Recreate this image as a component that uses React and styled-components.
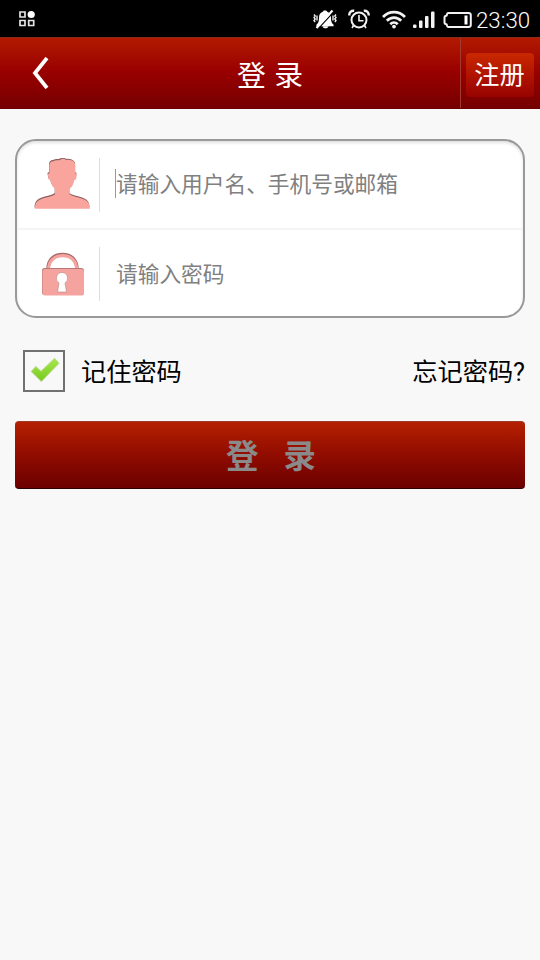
import React from 'react'
import styled, { createGlobalStyle } from 'styled-components'

const GlobalStyle = createGlobalStyle`
  * {
    box-sizing: border-box;
  }

  body {
    margin: 0;
    background: #f8f8f8;
    font-family: Roboto, "Noto Sans CJK SC", sans-serif;
  }

  button, input {
    font-family: inherit;
    border: 0;
    padding: 0;
  }
`

const Screen = styled.div`
  width: 540px;
  min-height: 960px;
  background: #f8f8f8;
`

const StatusBar = styled.div`
  display: flex;
  align-items: center;
  height: 37px;
  padding: 0 9px 0 18px;
  background: #000;
  color: #fff;
`

const StatusIcons = styled.div`
  display: flex;
  align-items: center;
  margin-left: auto;
`

const StatusIcon = styled.svg`
  display: block;
  flex: none;
  margin-right: ${({ $gap }) => $gap || 0}px;
`

const Clock = styled.span`
  width: 55px;
  font-size: 22.3px;
  font-weight: 300;
  line-height: 25px;
  padding-top: 3px;
  white-space: nowrap;
`

const Header = styled.header`
  display: grid;
  grid-template-columns: 80px 1fr 80px;
  grid-template-rows: 70px;
  height: 72px;
  background: linear-gradient(#b21a00, #990000 48%, #760000);
  border-top: 1px solid #8d2a1b;
  border-bottom: 1px solid #6c0000;
  color: #fff;
`

const BackButton = styled.button`
  display: flex;
  align-items: center;
  justify-content: center;
  background: none;
`

const Title = styled.h1`
  margin: 0;
  padding-top: 5px;
  font-size: 28.8px;
  font-weight: 400;
  line-height: 66px;
  text-align: center;
  word-spacing: 1.5px;
`

const HeaderAction = styled.div`
  display: flex;
  padding: 15px 6px 0 5px;
  border-left: 1px solid #a33a32;
`

const RegisterButton = styled.button`
  width: 68px;
  height: 44px;
  padding: 2px 1px 0 0;
  border-radius: 4px;
  background: linear-gradient(#c92800, #b01400 50%, #980300);
  color: #fff;
  font-size: 25.2px;
  line-height: 42px;
`

const Content = styled.main`
  padding: 30px 15px 0;
`

const Fields = styled.div`
  height: 179px;
  border: 2px solid #999;
  border-radius: 21px;
  background: #fff;
  box-shadow: inset 0 2px 3px rgba(0, 0, 0, .12);
`

const Field = styled.label`
  display: flex;
  align-items: center;
  height: ${({ $height }) => $height}px;
  border-bottom: ${({ $last }) => $last ? '0' : '2px solid #f4f4f4'};
`

const FieldIcon = styled.span`
  display: flex;
  justify-content: center;
  align-items: center;
  width: 83px;
  height: 54px;
  padding-left: ${({ $indent }) => $indent}px;
  border-right: 1px solid #ddd;
`

const Caret = styled.span`
  width: 1px;
  height: 29px;
  margin: -2px 0 0 15px;
  background: ${({ $visible }) => $visible ? '#999' : 'transparent'};
`

const Input = styled.input`
  flex: 1;
  min-width: 0;
  height: 40px;
  background: none;
  outline: none;
  font-size: 21.7px;

  &::placeholder {
    color: #808080;
    opacity: 1;
  }
`

const Options = styled.div`
  display: flex;
  align-items: center;
  height: 42px;
  margin-top: 32px;
  padding-left: 8px;
  font-size: 25.2px;
  line-height: 36px;
  color: #000;
`

const Checkbox = styled.span`
  display: flex;
  align-items: flex-start;
  justify-content: center;
  width: 42px;
  height: 42px;
  margin-right: 16px;
  padding: 5px 0 0 1px;
  border: 2px solid #707070;
`

const OptionText = styled.span`
  padding-top: 4px;
`

const Forgot = styled(OptionText)`
  margin-left: auto;
`

const LoginButton = styled.button`
  display: block;
  width: 100%;
  height: 68px;
  margin-top: 29px;
  padding: 5px 0 0 2px;
  border-top: 1px solid #9b3a28;
  border-bottom: 1px solid #2b0000;
  border-radius: 4px;
  background: linear-gradient(#b42000, #900c00 50%, #6c0000);
  color: #8a8a8a;
  font-size: 32.4px;
  font-weight: 700;
  line-height: 61px;
  white-space: pre;
  word-spacing: 4.5px;
`

const AppsIcon = () => (
	<StatusIcon width="18" height="18" fill="none" stroke="#e4e4e4" strokeWidth="1.7">
		<path d="M2 2h5v5H2zM2 10.5h5v5H2zM10.7 10.5h5v5h-5z" />
		<circle cx="13.2" cy="4.5" r="3.6" fill="#fff" stroke="none" />
	</StatusIcon>
)

const MutedBellIcon = () => (
	<StatusIcon width="24" height="20" $gap={11}>
		<path d="M12 1.500c1.200 0 2 .5 2.200 1.300C17 3.700 18 6 18 9c0 3.600.6 4.800 2.600 6.800v1.400H3.400v-1.400C5.400 13.800 6 12.600 6 9c0-3 1-5.300 3.800-6.200.2-.8 1-1.300 2.200-1.300z" fill="#fff" />
		<path d="M9.500 17.200h6c-.5 2.700-5.500 2.700-6 0z" fill="#fff" />
		<path d="M4.800 20.100L20.900 2.600" stroke="#000" strokeWidth="1.300" />
		<path d="M3.500 18.900L19.500 1.500" stroke="#fff" strokeWidth="2.200" />
		<path d="M1 5.500l1.200 1.500L1 8.500 2.200 10 1 11.500 2.200 13M4 6.500v5M23 5.500L21.800 7 23 8.500 21.800 10l1.200 1.500-1.200 1.500M20 6.500v5" stroke="#eee" strokeWidth="1.400" fill="none" />
	</StatusIcon>
)

const AlarmIcon = () => (
	<StatusIcon width="22" height="20" $gap={12} fill="none" stroke="#f2f2f2" strokeWidth="2">
		<circle cx="11" cy="11" r="7.500" />
		<path d="M1.300 6.500C1 3.500 3.200 1.500 6.200 1.800M20.700 6.500c.3-3-1.900-5-4.900-4.700" strokeWidth="2.400" />
		<path d="M11 6v5.700h4.500M5.500 16.500l-1.500 2.500M16.500 16.500l1.500 2.500" strokeWidth="1.600" />
	</StatusIcon>
)

const WifiIcon = () => (
	<StatusIcon width="24" height="20" $gap={7} fill="none" stroke="#f2f2f2" strokeWidth="2.800">
		<path d="M1 8c6.300-6.500 15.700-6.500 22 0M4.800 11.800c4.300-4.200 10.100-4.200 14.400 0M8.300 15.200c2.200-2.200 5.200-2.200 7.400 0" />
		<circle cx="12" cy="17.600" r="1.900" fill="#f2f2f2" stroke="none" />
	</StatusIcon>
)

const SignalIcon = () => (
	<StatusIcon width="22" height="18" $gap={8} fill="#f4f4f4">
		<rect y="14.500" width="3.500" height="3.500" rx="1" />
		<rect x="6" y="10.500" width="3.500" height="7.500" rx="1" />
		<rect x="12" y="6" width="3.500" height="12" rx="1" />
		<rect x="18" y="1.500" width="3.500" height="16.500" rx="1" />
	</StatusIcon>
)

const BatteryIcon = () => (
	<StatusIcon width="29" height="18" $gap={4}>
		<path d="M5.500 3h20q2.300 0 2.300 2.300v9.400q0 2.300-2.300 2.300h-20q-1.500 0-1.800-2.500-2.200-.5-2.200-2v-5q0-1.500 2.200-2Q4 3 5.500 3z" fill="none" stroke="#f2f2f2" strokeWidth="2" />
		<rect x="21.500" y="5.500" width="3" height="9" fill="#fff" />
	</StatusIcon>
)

const userPath = 'M19 4c3-2 5 0 8-2 2-.8 3 0 5 .8 3-.5 7 .2 9 3.700v9.500l1.500 1-.7 5-2 1c-.5 4-2 6.500-4.500 8.500v5.500c5 3.500 13 3 17.500 7 2 2 2.700 4.500 2.700 7.500H.5c0-3 .7-5.500 2.700-7.500 4.500-4 12.500-3.500 17.500-7v-5.500c-2.500-2-4-4.500-4.500-8.500l-2-1-.7-5 1.500-1V8c0-2 1.500-4 4-4z'

const UserIcon = () => (
	<svg width="57" height="53" viewBox="0 1.500 57 53">
		<path d={userPath} fill="#8b6060" transform="translate(0 -.5)" />
		<path d={userPath} fill="#f9a49d" transform="translate(.3 .7)" />
	</svg>
)

const LockIcon = () => (
	<svg width="44" height="44" viewBox="0 0 44 44">
		<path d="M7 17c0-9 6-14.500 14.500-14.500S36 8 36 17" fill="none" stroke="#a46a68" strokeWidth="3.500" />
		<path d="M7.500 18c0-9 6-14.300 14.200-14.300S35.700 9 35.700 18" fill="none" stroke="#f4a39e" strokeWidth="3.200" />
		<rect x="1" y="16" width="42" height="27" rx="2.500" fill="#b87976" />
		<rect x="1.500" y="17" width="41.500" height="26.500" rx="2.500" fill="#f4a39e" />
		<path d="M21 20.500a5.700 5.700 0 0 1 3 10.500l1.500 9h-9l1.500-9a5.700 5.700 0 0 1 3-10.500z" fill="#fff" stroke="#bd817e" strokeWidth=".6" />
	</svg>
)

const CheckMark = () => (
	<svg width="30" height="26" viewBox="0 0 30 26">
		<defs>
			<linearGradient id="check" x1="0" y1="0" x2="0" y2="1">
				<stop offset="0" stopColor="#a9e84b" />
				<stop offset="1" stopColor="#75c91e" />
			</linearGradient>
		</defs>
		<path d="M1.200 14.500l4.600-5 5.200 4.800L24.600 1.300l4.400 5L11.300 24.500z" fill="url(#check)" stroke="#b5d98c" strokeLinejoin="round" />
	</svg>
)

const fields = [
	{ name: 'user', placeholder: '请输入用户名、手机号或邮箱', type: 'text', icon: <UserIcon />, indent: 8, height: 89 },
	{ name: 'password', placeholder: '请输入密码', type: 'password', icon: <LockIcon />, indent: 10, height: 88 }
]

const App = () => (
	<>
		<GlobalStyle />
		<Screen>
			<StatusBar>
				<AppsIcon />
				<StatusIcons>
					<MutedBellIcon />
					<AlarmIcon />
					<WifiIcon />
					<SignalIcon />
					<BatteryIcon />
					<Clock>23:30</Clock>
				</StatusIcons>
			</StatusBar>
			<Header>
				<BackButton>
					<svg width="18" height="32" fill="none" stroke="#fff" strokeWidth="3.800">
						<path d="M16 1L4 16l12 15" />
					</svg>
				</BackButton>
				<Title>登 录</Title>
				<HeaderAction>
					<RegisterButton>注册</RegisterButton>
				</HeaderAction>
			</Header>
			<Content>
				<Fields>
					{
						fields.map((field, i) => (
							<Field key={field.name} $height={field.height} $last={i === fields.length - 1}>
								<FieldIcon $indent={field.indent}>{field.icon}</FieldIcon>
								<Caret $visible={i === 0} />
								<Input type={field.type} placeholder={field.placeholder} />
							</Field>
						))
					}
				</Fields>
				<Options>
					<Checkbox><CheckMark /></Checkbox>
					<OptionText>记住密码</OptionText>
					<Forgot>忘记密码?</Forgot>
				</Options>
				<LoginButton>{'登  录'}</LoginButton>
			</Content>
		</Screen>
	</>
)

export default App
